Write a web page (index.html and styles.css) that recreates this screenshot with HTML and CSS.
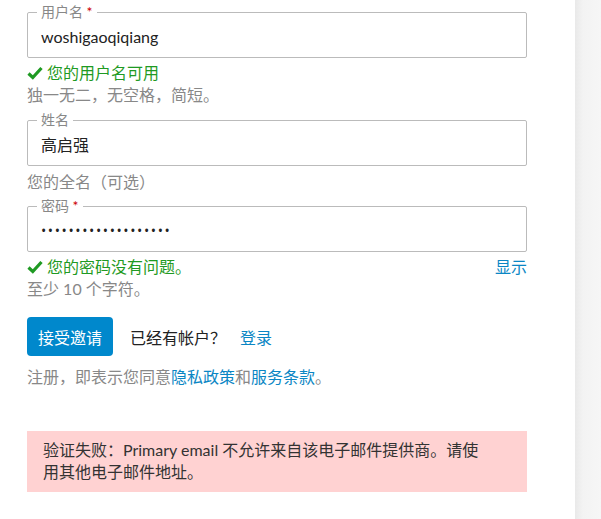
FILE: index.html
```html
<!DOCTYPE html>
<html lang="zh-CN">
<head>
<meta charset="utf-8">
<title>接受邀请</title>
<link rel="stylesheet" href="styles.css">
</head>
<body>
<div class="page">
  <main class="main">
    <form class="form">
      <fieldset class="field">
        <legend class="legend">用户名 <span class="req">*</span></legend>
        <input class="input" type="text" value="woshigaoqiqiang">
      </fieldset>
      <div class="status ok">
        <svg class="check" viewBox="0 0 16 14" width="16" height="14"><path d="M1.5 7.5 L5.8 11.5 L14.5 2" fill="none" stroke="currentColor" stroke-width="3.2"/></svg>
        <span>您的用户名可用</span>
      </div>
      <div class="hint">独一无二，无空格，简短。</div>

      <fieldset class="field gap">
        <legend class="legend">姓名</legend>
        <input class="input" type="text" value="高启强">
      </fieldset>
      <div class="hint mt">您的全名（可选）</div>

      <fieldset class="field gap2">
        <legend class="legend">密码 <span class="req">*</span></legend>
        <input class="input pw" type="text" value="•••••••••••••••••••">
      </fieldset>
      <div class="status ok row">
        <span class="status-left">
          <svg class="check" viewBox="0 0 16 14" width="16" height="14"><path d="M1.5 7.5 L5.8 11.5 L14.5 2" fill="none" stroke="currentColor" stroke-width="3.2"/></svg>
          <span>您的密码没有问题。</span>
        </span>
        <a class="link" href="#">显示</a>
      </div>
      <div class="hint">至少 10 个字符。</div>

      <div class="actions">
        <button class="btn" type="button">接受邀请</button>
        <span class="have">已经有帐户？</span>
        <a class="link" href="#">登录</a>
      </div>
      <div class="terms">注册，即表示您同意<a class="link" href="#">隐私政策</a>和<a class="link" href="#">服务条款</a>。</div>

      <div class="error">验证失败：Primary email 不允许来自该电子邮件提供商。请使<br>用其他电子邮件地址。</div>
    </form>
  </main>
  <aside class="side"></aside>
</div>
</body>
</html>
```

FILE: styles.css
```css
* { box-sizing: border-box; }
html, body { margin: 0; padding: 0; height: 100%; }
body {
  font-family: "Lato", "Noto Sans CJK SC", sans-serif;
  font-size: 16px;
  color: #333;
  background: #fff;
}
.page { display: flex; min-height: 100%; }
.main { width: 575px; flex: none; background: #fff; }
.side {
  flex: 1;
  background: linear-gradient(to right, #e9e9e9 0, #f3f3f3 8px, #f6f6f6 100%);
}
.form { width: 500px; margin-left: 27px; padding-top: 4px; }
.field {
  margin: 0;
  padding: 0 9px 9px;
  border: 1px solid #bbb;
  border-radius: 2px;
}
.gap { margin-top: 6px; }
.gap2 { margin-top: 5px; }
.legend {
  font-size: 14px;
  line-height: 16px;
  color: #888;
  padding: 0 4px;
}
.req { color: #c00; }
.input {
  display: block;
  width: 100%;
  border: none;
  outline: none;
  padding: 0 4px;
  margin-top: 6px;
  height: 22px;
  font: inherit;
  font-size: 16px;
  line-height: 22px;
  color: #222;
  background: transparent;
}
.pw { font-family: "Open Sans", sans-serif; font-size: 14px; letter-spacing: 1.6px; color: #222; }
.status {
  margin-top: 4px;
  line-height: 22px;
  display: flex;
  align-items: center;
  gap: 4px;
}
.ok { color: #1f9a23; }
.row { justify-content: space-between; }
.status-left { display: flex; align-items: center; gap: 4px; }
.check { display: block; }
.hint { color: #888; line-height: 22px; }
.mt { margin-top: 5px; }
.link { color: #0a86c4; text-decoration: none; }
.actions {
  margin-top: 17px;
  display: flex;
  align-items: center;
}
.btn {
  font: inherit;
  font-size: 16px;
  color: #fff;
  background: #0088cc;
  border: none;
  border-radius: 4px;
  height: 39px;
  padding: 0 11px;
}
.have { margin-left: 17px; color: #222; }
.actions .link { margin-left: 14px; }
.terms { margin-top: 10px; line-height: 22px; color: #888; }
.error {
  margin-top: 43px;
  background: #ffd2d2;
  padding: 8px 16px 9px;
  line-height: 22px;
  color: #333;
}
```
